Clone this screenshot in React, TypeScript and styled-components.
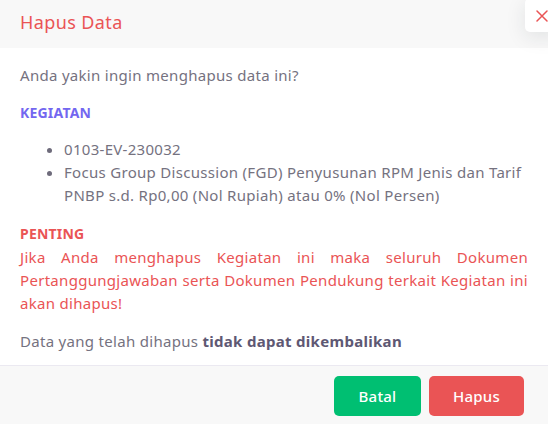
import React from "react";
import styled, { createGlobalStyle } from "styled-components";

const GlobalStyle = createGlobalStyle`
  html, body {
    margin: 0;
    padding: 0;
    background: #ffffff;
  }
  body {
    font-family: "Noto Sans", "Liberation Sans", sans-serif;
    -webkit-font-smoothing: antialiased;
  }
`;

const Modal = styled.div`
  position: relative;
  width: 548px;
  height: 424px;
  display: flex;
  flex-direction: column;
  background: #fff;
  overflow: hidden;
`;

const Header = styled.div`
  height: 48px;
  display: flex;
  align-items: center;
  padding: 0 20px 4px;
  background: #f8f8f8;
  box-sizing: border-box;
`;

const Title = styled.h5`
  margin: 0;
  font-size: 18px;
  font-weight: 400;
  letter-spacing: 0.4px;
  color: #ea5455;
`;

const CloseButton = styled.button`
  position: absolute;
  top: -2px;
  left: 525px;
  width: 34px;
  height: 34px;
  border: none;
  border-radius: 5px;
  background: #fff;
  box-shadow: 0 5px 20px 0 rgba(34, 41, 47, 0.1);
  padding: 0;
  display: flex;
  align-items: center;
  justify-content: flex-start;
  svg {
    margin-left: 11px;
    margin-top: 2px;
  }
`;

const Body = styled.div`
  flex: 1;
  padding: 16px 20px 0;
  font-size: 15px;
  line-height: 23px;
  letter-spacing: 0.3px;
  color: #75727f;
`;

const Para = styled.p<{ $gap?: number }>`
  margin: 0 0 ${(p) => p.$gap ?? 15}px;
`;

const Label = styled.div<{ $tone: "primary" | "danger" }>`
  font-weight: 700;
  font-size: 14px;
  letter-spacing: 0.2px;
  color: ${(p) => (p.$tone === "primary" ? "#7367f0" : "#ea5455")};
`;

const List = styled.ul`
  margin: 14px 0 15px;
  padding-left: 44px;
  li::marker {
    color: #6e6b7b;
  }
`;

const Warning = styled.p`
  margin: 1px 0 15px;
  color: #ea5455;
  text-align: justify;
`;

const Strong = styled.b`
  font-weight: 700;
  color: #5e5873;
`;

const Footer = styled.div`
  height: 59px;
  border-top: 1px solid #ebe9f1;
  background: #f8f8f8;
  display: flex;
  justify-content: flex-end;
  align-items: flex-start;
  gap: 8px;
  padding: 10px 24px 0;
  box-sizing: border-box;
`;

const Button = styled.button<{ $variant: "success" | "danger" }>`
  height: 40px;
  width: ${(p) => (p.$variant === "success" ? 87 : 95)}px;
  padding: 0;
  border: none;
  border-radius: 5px;
  font-family: inherit;
  font-size: 15px;
  font-weight: 500;
  letter-spacing: 0.2px;
  color: #fff;
  background: ${(p) => (p.$variant === "success" ? "#00bf72" : "#ea5455")};
  cursor: pointer;
`;

export default function App() {
  return (
    <Modal>
      <GlobalStyle />
      <Header>
        <Title>Hapus Data</Title>
      </Header>
      <CloseButton aria-label="Close">
        <svg width="12" height="12" viewBox="0 0 12 12" fill="none">
          <path d="M1 1L11 11M11 1L1 11" stroke="#ea5455" strokeWidth="1.5" strokeLinecap="round" />
        </svg>
      </CloseButton>
      <Body>
        <Para $gap={14}>Anda yakin ingin menghapus data ini?</Para>
        <Label $tone="primary">KEGIATAN</Label>
        <List>
          <li>0103-EV-230032</li>
          <li>
            Focus Group Discussion (FGD) Penyusunan RPM Jenis dan Tarif PNBP
            s.d. Rp0,00 (Nol Rupiah) atau 0% (Nol Persen)
          </li>
        </List>
        <Label $tone="danger">PENTING</Label>
        <Warning>
          Jika Anda menghapus Kegiatan ini maka seluruh Dokumen
          Pertanggungjawaban serta Dokumen Pendukung terkait Kegiatan ini akan
          dihapus!
        </Warning>
        <Para $gap={0}>
          Data yang telah dihapus <Strong>tidak dapat dikembalikan</Strong>
        </Para>
      </Body>
      <Footer>
        <Button $variant="success">Batal</Button>
        <Button $variant="danger">Hapus</Button>
      </Footer>
    </Modal>
  );
}
